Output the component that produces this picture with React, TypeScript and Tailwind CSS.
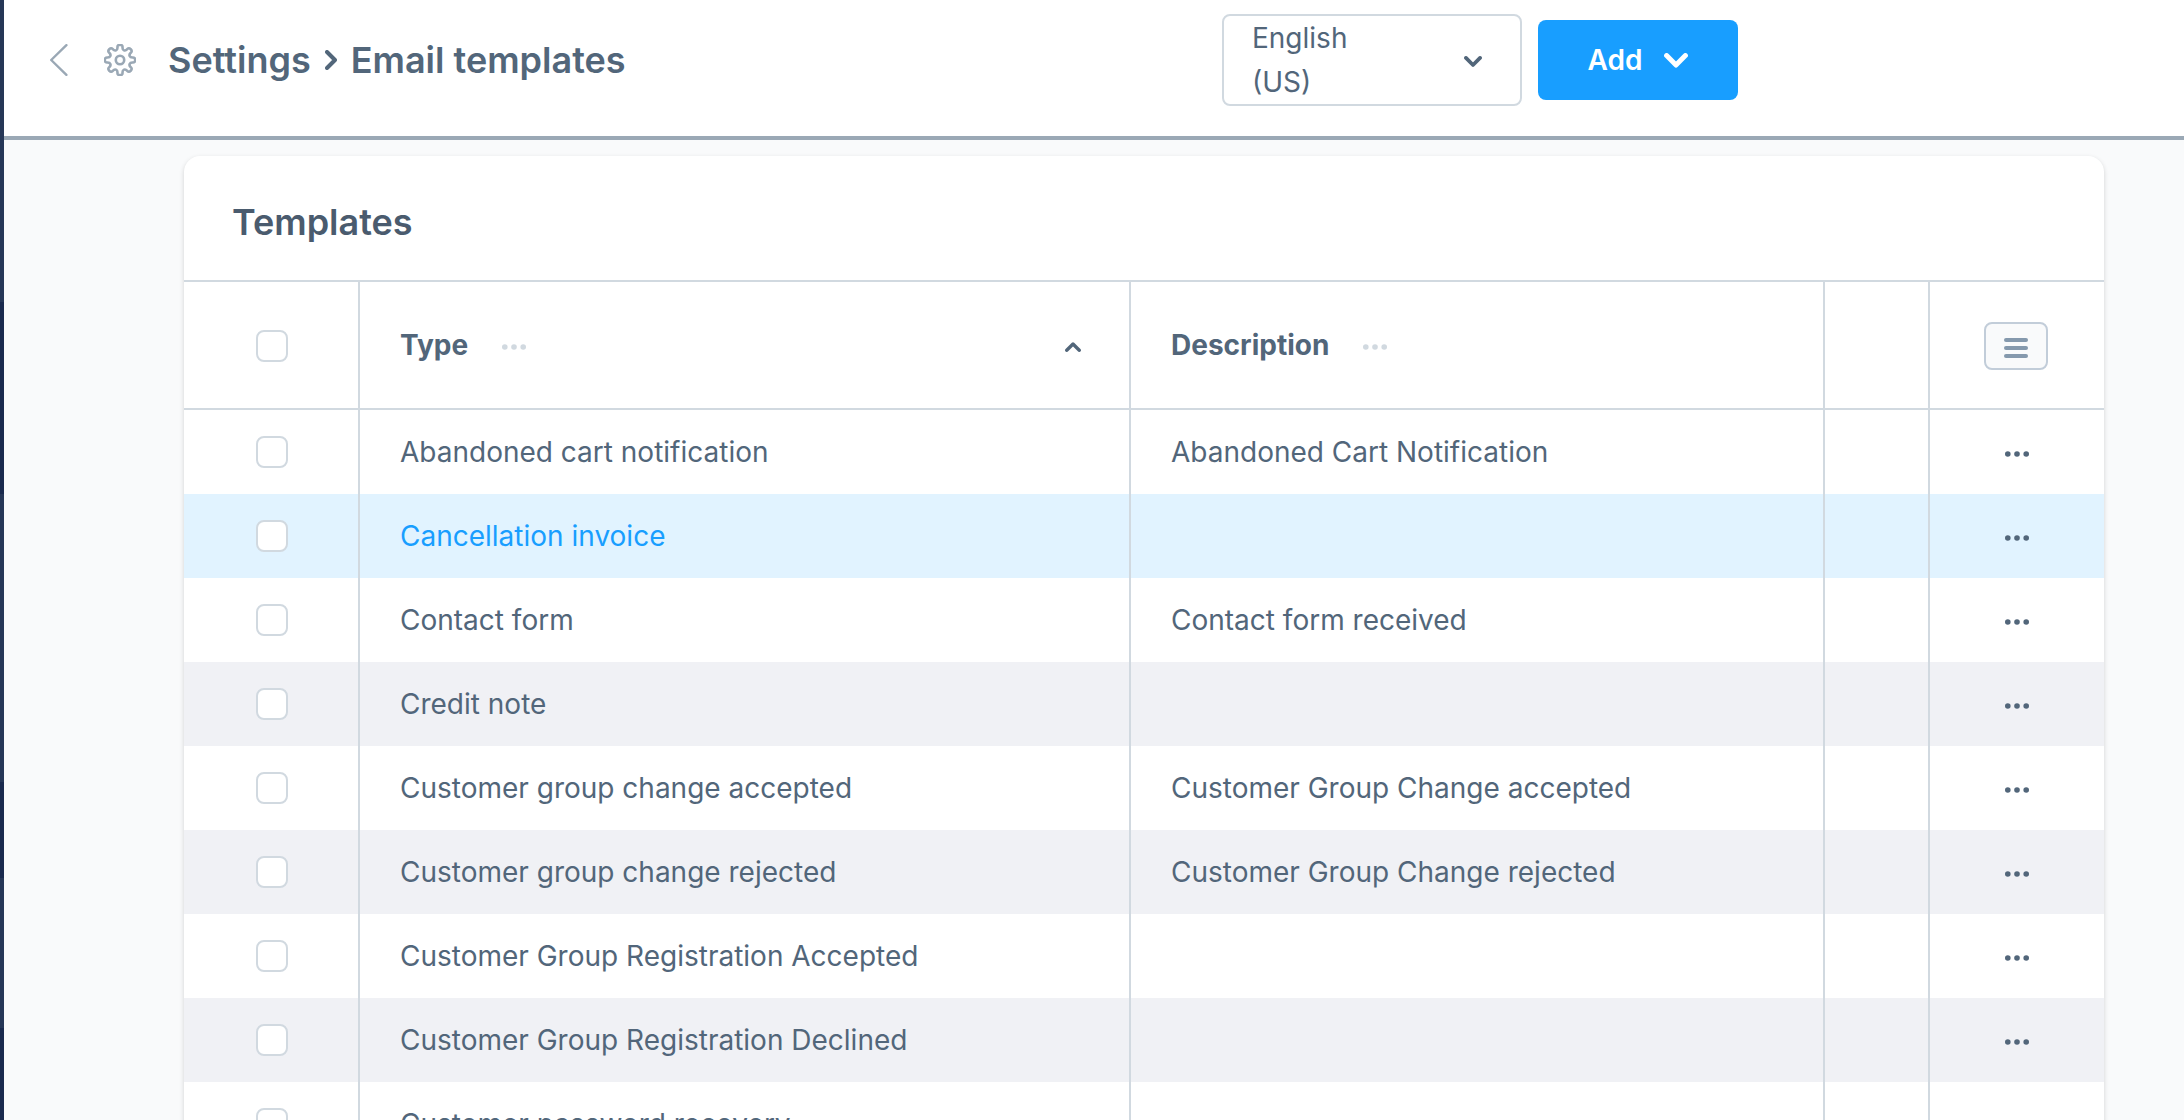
import { type ReactNode } from "react";

type Template = { type: string; description?: string; active?: boolean };

const templates: Template[] = [
  { type: "Abandoned cart notification", description: "Abandoned Cart Notification" },
  { type: "Cancellation invoice", active: true },
  { type: "Contact form", description: "Contact form received" },
  { type: "Credit note" },
  { type: "Customer group change accepted", description: "Customer Group Change accepted" },
  { type: "Customer group change rejected", description: "Customer Group Change rejected" },
  { type: "Customer Group Registration Accepted" },
  { type: "Customer Group Registration Declined" },
  { type: "Customer password recovery" },
];

// Outline of an eight-toothed cog, rounded by curving through the midpoints of its corners.
function cogOutline() {
  const corners: [number, number][] = [];
  for (let tooth = 0; tooth < 8; tooth++) {
    for (const [offset, radius] of [[-10, 15.4], [10, 15.4], [13, 10.6], [32, 10.6]]) {
      const angle = ((tooth * 45 + offset) * Math.PI) / 180;
      corners.push([16 + radius * Math.sin(angle), 16 - radius * Math.cos(angle)]);
    }
  }
  const middle = (a: [number, number], b: [number, number]) =>
    `${((a[0] + b[0]) / 2).toFixed(2)} ${((a[1] + b[1]) / 2).toFixed(2)}`;
  const start = middle(corners[corners.length - 1], corners[0]);
  const curves = corners.map((corner, i) => {
    const next = corners[(i + 1) % corners.length];
    return `Q${corner[0].toFixed(2)} ${corner[1].toFixed(2)} ${middle(corner, next)}`;
  });
  return `M${start}${curves.join("")}Z`;
}

function CogIcon() {
  return (
    <svg viewBox="0 0 32 32" fill="none" stroke="currentColor" strokeWidth="2.6" strokeLinejoin="round" className="size-8 shrink-0" aria-hidden="true">
      <path d={cogOutline()} />
      <circle cx="16" cy="16" r="4.2" />
    </svg>
  );
}

function BackIcon() {
  return (
    <svg viewBox="0 0 18 32" fill="none" stroke="currentColor" strokeWidth="2.4" strokeLinecap="round" strokeLinejoin="round" className="h-8 w-[18px]" aria-hidden="true">
      <path d="M16.400 1.200 1.200 16l15.200 14.800" />
    </svg>
  );
}

function Chevron({ className }: { className: string }) {
  return (
    <svg viewBox="0 0 24 15" fill="none" stroke="currentColor" strokeWidth="5" strokeLinecap="round" strokeLinejoin="round" className={className} aria-hidden="true">
      <path d="M2.600 2.600 12 12l9.400-9.400" />
    </svg>
  );
}

function Separator() {
  return (
    <svg viewBox="0 0 12 20" fill="none" stroke="currentColor" strokeWidth="4" strokeLinecap="round" strokeLinejoin="round" className="mx-3.5 h-5 w-3 shrink-0" aria-hidden="true">
      <path d="M2 2l8 8-8 8" />
    </svg>
  );
}

function Dots() {
  return (
    <svg viewBox="0 0 24 6" fill="currentColor" className="h-1.5 w-6" aria-hidden="true">
      <circle cx="2.800" cy="3" r="2.800" />
      <circle cx="12" cy="3" r="2.800" />
      <circle cx="21.200" cy="3" r="2.800" />
    </svg>
  );
}

function Tick({ label }: { label: string }) {
  return (
    <input
      type="checkbox"
      aria-label={label}
      className="block size-8 appearance-none rounded-lg border-2 border-[#d1d9e0] bg-white checked:border-[#189eff] checked:bg-[#189eff]"
    />
  );
}

function HeadCell({ label, className, children }: { label: string; className: string; children?: ReactNode }) {
  return (
    <th scope="col" className={`border-r-2 border-b-2 border-[#d1d9e0] px-10 ${className}`}>
      <div className="flex items-center">
        <span className="text-[28px] leading-10 font-bold">{label}</span>
        <button type="button" aria-label={`${label} column options`} className="ml-[34px] pt-1 text-[#d1d9e0]">
          <Dots />
        </button>
        {children}
      </div>
    </th>
  );
}

function Row({ type, description, active }: Template) {
  return (
    <tr className={active ? "h-[84px] bg-[#e1f3ff]" : "h-[84px] even:bg-[#f0f1f5]"}>
      <td className="border-r-2 border-[#d1d9e0] pl-[72px]">
        <Tick label={`Select ${type}`} />
      </td>
      <td className="border-r-2 border-[#d1d9e0] px-10">
        <a href="#template" className={active ? "text-[#189eff]" : ""}>{type}</a>
      </td>
      <td className="border-r-2 border-[#d1d9e0] px-10">{description}</td>
      <td className="border-r-2 border-[#d1d9e0]" />
      <td>
        <button type="button" aria-label={`Actions for ${type}`} className="mx-auto block pt-1">
          <Dots />
        </button>
      </td>
    </tr>
  );
}

export default function App() {
  return (
    <div className="flex h-screen overflow-hidden bg-[#f9fafb] font-['Inter',sans-serif] text-[#52667a]">
      <nav aria-label="Main navigation" className="flex w-1 shrink-0 flex-col bg-[#1a2a4e]">
        <div className="h-[302px] bg-[#263757]" />
        <div className="mt-48 h-72 bg-[#263757]" />
        <div className="mt-24 h-[150px] bg-[#263757]" />
      </nav>

      <div className="flex min-w-0 grow flex-col">
        <header className="flex shrink-0 items-center gap-4 border-b-4 border-[#9aa8b5] bg-white pt-3.5 pr-[446px] pb-[30px] pl-[46px]">
          <div className="flex min-w-0 grow items-center">
            <a href="#settings" aria-label="Back" className="text-[#9aa8b5]">
              <BackIcon />
            </a>
            <span className="mr-8 ml-9 text-[#9aa8b5]">
              <CogIcon />
            </span>
            <h1 className="flex items-center text-4xl font-semibold whitespace-nowrap">
              Settings
              <Separator />
              Email templates
            </h1>
          </div>
          <label className="relative flex w-[300px] shrink-0 items-center justify-between rounded-lg border-2 border-[#d1d9e0] bg-white pr-[38px] pl-7">
            <span className="w-32 text-[28px] leading-[44px]">English (US)</span>
            <Chevron className="mt-1 w-[18px]" />
            <select aria-label="Language" className="absolute inset-0 w-full cursor-pointer opacity-0">
              <option>English (US)</option>
            </select>
          </label>
          <button type="button" className="flex h-20 w-[200px] shrink-0 items-center justify-center gap-[22px] rounded-lg bg-[#189eff] text-[28px] font-semibold text-white">
            Add
            <Chevron className="w-6" />
          </button>
        </header>

        <main className="min-h-0 grow pt-4 pr-20 pl-[180px]">
          <section className="overflow-hidden rounded-t-2xl bg-white shadow-[0_2px_5px_rgba(0,0,0,0.16)]">
            <h2 className="px-12 pt-11 pb-9 text-4xl leading-[44px] font-semibold text-[#4a5b6e]">Templates</h2>
            <table className="w-full table-fixed border-separate border-spacing-0 border-t-2 border-[#d1d9e0] text-[28px] leading-10">
              <thead>
                <tr className="h-32">
                  <th scope="col" className="w-44 border-r-2 border-b-2 border-[#d1d9e0] pt-0.5 pl-[72px]">
                    <Tick label="Select all" />
                  </th>
                  <HeadCell label="Type" className="w-[771px]">
                    <button type="button" aria-label="Sort by type, ascending" className="mr-2 ml-auto pt-1">
                      <Chevron className="w-4 rotate-180" />
                    </button>
                  </HeadCell>
                  <HeadCell label="Description" className="" />
                  <th scope="col" aria-label="Details" className="w-[105px] border-r-2 border-b-2 border-[#d1d9e0]" />
                  <th scope="col" className="w-[174px] border-b-2 border-[#d1d9e0] pt-0.5 pr-0.5">
                    <button type="button" aria-label="Table settings" className="mx-auto flex h-12 w-16 flex-col items-center justify-center gap-1 rounded-lg border-2 border-[#c2cdd9] bg-[#f9fafb] pt-1 text-[#8599ad]">
                      <span className="h-1 w-6 rounded-full bg-current" />
                      <span className="h-1 w-6 rounded-full bg-current" />
                      <span className="h-1 w-6 rounded-full bg-current" />
                    </button>
                  </th>
                </tr>
              </thead>
              <tbody>
                {templates.map((template) => (
                  <Row key={template.type} {...template} />
                ))}
              </tbody>
            </table>
          </section>
        </main>
      </div>
    </div>
  );
}
